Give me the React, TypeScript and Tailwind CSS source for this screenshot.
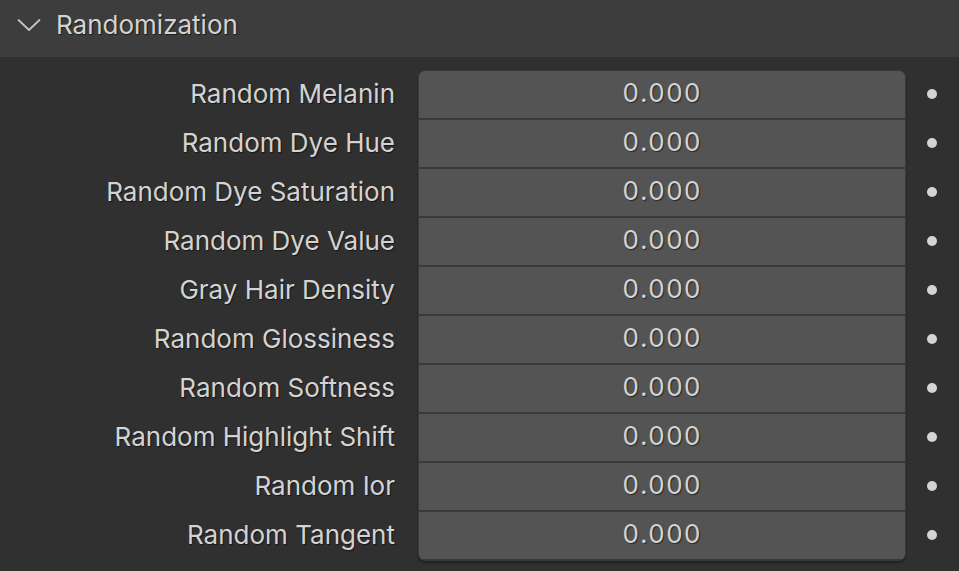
const rows = [
  "Random Melanin",
  "Random Dye Hue",
  "Random Dye Saturation",
  "Random Dye Value",
  "Gray Hair Density",
  "Random Glossiness",
  "Random Softness",
  "Random Highlight Shift",
  "Random Ior",
  "Random Tangent",
];

const shadow = "[text-shadow:1px_1px_1px_rgba(0,0,0,0.55)]";

export default function App() {
  return (
    <div
      className="w-[959px] h-[571px] bg-[#303030] overflow-hidden text-[#d3d3d3]"
      style={{ fontFamily: "Inter, 'Noto Sans', sans-serif" }}
    >
      {/* panel header */}
      <div className="h-[57px] bg-[#3d3d3d] flex items-center pl-[17px] pb-[8px]">
        <svg width="24" height="14" viewBox="0 0 24 14" className="mr-[15px] mt-[1px]">
          <path d="M1.5 2 L12 12 L22.5 2" fill="none" stroke="#c4c4c4" strokeWidth="1.8" strokeLinecap="round" strokeLinejoin="round" />
        </svg>
        <span className={`text-[26px] ${shadow}`}>Randomization</span>
      </div>

      {/* properties */}
      <div className="pt-[13px] flex">
        <div className="w-[395px] flex flex-col pt-px">
          {rows.map((r) => (
            <div key={r} className={`h-[49px] flex items-center justify-end pb-[5px] text-[26px] ${shadow}`}>
              {r}
            </div>
          ))}
        </div>

        <div className="ml-[23px] w-[488px] rounded-[7px] border border-[#3a3a3a] bg-[#3a3a3a] overflow-hidden shadow-[0_2px_2px_rgba(0,0,0,0.35)]">
          {rows.map((r, i) => (
            <div
              key={r}
              className={`h-[47px] bg-[#545454] flex items-center justify-center pb-[4px] text-[26px] tabular-nums tracking-[1px] ${shadow} ${i > 0 ? "mt-[2px]" : ""}`}
            >
              0.000
            </div>
          ))}
        </div>

        <div className="flex-1 flex flex-col pt-px">
          {rows.map((r) => (
            <div key={r} className="h-[49px] flex items-center pl-[21px] pb-[3px]">
              <div className="w-[10px] h-[10px] rounded-full bg-[#d4d4d4]" />
            </div>
          ))}
        </div>
      </div>
    </div>
  );
}
